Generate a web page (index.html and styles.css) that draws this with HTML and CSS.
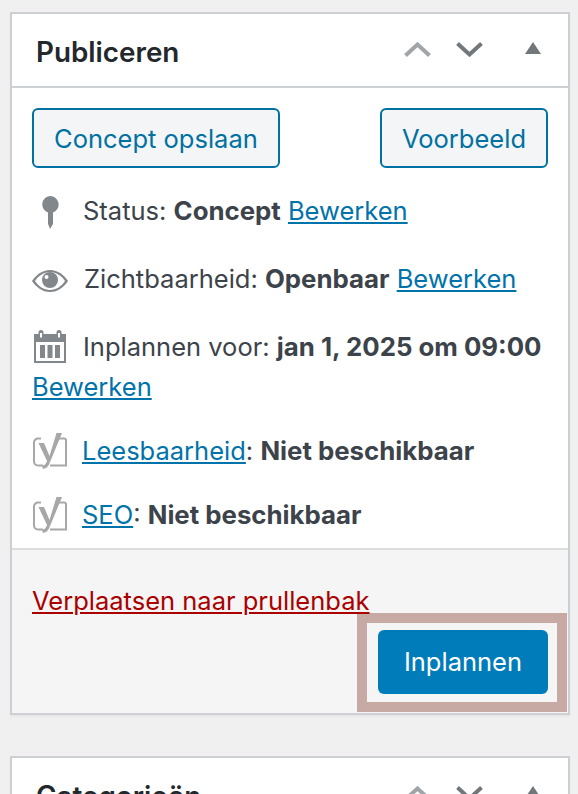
FILE: index.html
```html
<!DOCTYPE html>
<html lang="nl">
<head>
<meta charset="utf-8">
<title>Publiceren</title>
<link rel="stylesheet" href="styles.css">
</head>
<body>
<section class="card">
  <header class="card-head">
    <h2>Publiceren</h2>
    <div class="controls">
      <svg class="ctl ctl-up" viewBox="0 0 27 15"><path d="M1.500 13.500l12-11 12 11"/></svg>
      <svg class="ctl ctl-down" viewBox="0 0 27 15"><path d="M1.500 1.500l12 11 12-11"/></svg>
      <svg class="tri" viewBox="0 0 16 12"><path d="M8 0l8 12H0z"/></svg>
    </div>
  </header>
  <div class="actions">
    <a class="btn">Concept opslaan</a>
    <a class="btn">Voorbeeld</a>
  </div>
  <div class="rows">
    <div class="row"><svg class="ic ic-pin" viewBox="0 0 18 33"><path d="M9 0a8.500 8.500 0 0 1 3 16.500V28l-3 5-1.500-4-.5-1V16.500A8.500 8.500 0 0 1 9 0z"/></svg><span>Status: <b>Concept</b> <a href="#">Bewerken</a></span></div>
    <div class="row"><svg class="ic ic-eye" viewBox="0 0 36 22"><path d="M18 0c8 0 14 5 18 11-4 6-10 11-18 11S4 17 0 11C4 5 10 0 18 0z"/><path class="ic-hole" d="M18 2C12 2 6 6 3 11c3 5 9 9 15 9s12-4 15-9c-3-5-9-9-15-9z"/><circle cx="18" cy="10" r="8"/><circle class="ic-hole" cx="14.500" cy="7" r="2"/></svg><span>Zichtbaarheid: <b>Openbaar</b> <a href="#">Bewerken</a></span></div>
    <div class="row"><svg class="ic ic-cal" viewBox="0 0 32 33"><path fill-rule="evenodd" d="M7 0a2.500 2.500 0 0 1 2.500 2.500V4h13V2.500a2.500 2.500 0 0 1 5 0V4H32v29H0V4h4.500V2.500A2.500 2.500 0 0 1 7 0zM2 12v19h28V12zM6 3v4.500h2V3zM24 3v4.500h2V3z"/><path d="M6 15h5v13H6zM13.500 15h5v13h-5zM21 15h5v13h-5z"/></svg><span>Inplannen voor: <b>jan 1, 2025 om 09:00</b><br><a href="#">Bewerken</a></span></div>
    <div class="row row-y"><svg class="ic ic-y" viewBox="0 0 34 36"><path class="y-box" d="M8 5.500H5a4 4 0 0 0-4 4v19a4 4 0 0 0 4 4h5M25 5.500h6a2 2 0 0 1 2 2v25H17"/><path class="y-mark" d="M23.500 0H29L16 31.500q-1.500 3.500-6 4.500l-1-3q4-1 5-5L5.500 10H11l5.500 13z"/></svg><span><a href="#">Leesbaarheid</a>: <b>Niet beschikbaar</b></span></div>
    <div class="row row-y"><svg class="ic ic-y" viewBox="0 0 34 36"><path class="y-box" d="M8 5.500H5a4 4 0 0 0-4 4v19a4 4 0 0 0 4 4h5M25 5.500h6a2 2 0 0 1 2 2v25H17"/><path class="y-mark" d="M23.500 0H29L16 31.500q-1.500 3.500-6 4.500l-1-3q4-1 5-5L5.500 10H11l5.500 13z"/></svg><span><a href="#">SEO</a>: <b>Niet beschikbaar</b></span></div>
  </div>
  <footer class="card-foot">
    <a class="trash" href="#">Verplaatsen naar prullenbak</a>
    <div class="highlight"><a class="btn-primary">Inplannen</a></div>
  </footer>
</section>
<section class="card card-next">
  <header class="card-head">
    <h2>Categorieën</h2>
    <div class="controls">
      <svg class="ctl ctl-up" viewBox="0 0 27 15"><path d="M1.500 13.500l12-11 12 11"/></svg>
      <svg class="ctl ctl-down" viewBox="0 0 27 15"><path d="M1.500 1.500l12 11 12-11"/></svg>
      <svg class="tri" viewBox="0 0 16 12"><path d="M8 0l8 12H0z"/></svg>
    </div>
  </header>
</section>
</body>
</html>
```
FILE: styles.css
```css
* { box-sizing: border-box; }
html, body { height: 794px; overflow: hidden; }
body {
  margin: 0;
  padding: 12px 8px 0 10px;
  background: #f0f0f1;
  color: #3c434a;
  font: 400 25.5px/40px Inter, "Noto Sans", sans-serif;
}
b { font-size: 25.8px; font-weight: 700; }
.card {
  width: 560px;
  background: #fff;
  border: 2px solid #ccd0d4;
  box-shadow: 0 2px 2px rgba(0, 0, 0, .04);
}
.card-next { margin-top: 41px; }
.card-head {
  height: 74px;
  display: flex;
  align-items: center;
  justify-content: space-between;
  padding: 0 27px 0 24px;
  border-bottom: 2px solid #ccd0d4;
}
h2 {
  margin: 0;
  padding-top: 5px;
  font-size: 27.8px;
  font-weight: 600;
  line-height: 69px;
  color: #23282d;
}
.controls { display: flex; align-items: center; margin-top: -1px; }
.ctl { width: 27px; height: 15px; fill: none; stroke-width: 4; }
.ctl-up { stroke: #a0a5aa; margin-right: 25px; }
.ctl-down { stroke: #72777c; margin-right: 42px; }
.tri { width: 16px; height: 12px; fill: #72777c; margin-top: -3px; }
.actions {
  display: flex;
  justify-content: space-between;
  padding: 20px 20px 0;
}
.btn {
  display: block;
  height: 60px;
  padding: 0 20px;
  line-height: 57px;
  color: #0071a1;
  background: #f3f5f6;
  border: 2px solid #0071a1;
  border-radius: 6px;
}
.rows { padding-top: 23px; }
.row {
  padding: 0 20px 28px;
  white-space: nowrap;
}
.row:nth-child(3), .row-y { padding-bottom: 24px; }
.row-y:last-child { padding-bottom: 13px; }
a { color: #0073aa; }
.ic { vertical-align: middle; fill: #82878c; }
.ic-hole { fill: #fff; }
.ic-pin { width: 18px; height: 33px; margin: -11px 24px -9px 9px; }
.ic-eye { width: 36px; height: 22px; margin: -4px 16px -4px 0; }
.ic-cal { width: 32px; height: 33px; margin: -15px 17px -9px 2px; }
.ic-y { width: 34px; height: 36px; margin: -13px 15px -9px 1px; }
.y-box { fill: none; stroke: #a7a7a7; stroke-width: 2; }
.y-mark { fill: #a7a7a7; }
.card-foot {
  height: 165px;
  padding: 31px 20px 0;
  background: #f5f5f5;
  border-top: 2px solid #ddd;
}
.trash { display: block; color: #a00; }
.highlight {
  width: 210px;
  height: 99px;
  margin: -8px -19px 0 auto;
  padding: 7px 9px 8px 11px;
  border: 10px solid #c6aaa3;
}
.btn-primary {
  display: block;
  height: 64px;
  line-height: 64px;
  text-align: center;
  color: #fff;
  background: #007cba;
  border-radius: 6px;
}
```
